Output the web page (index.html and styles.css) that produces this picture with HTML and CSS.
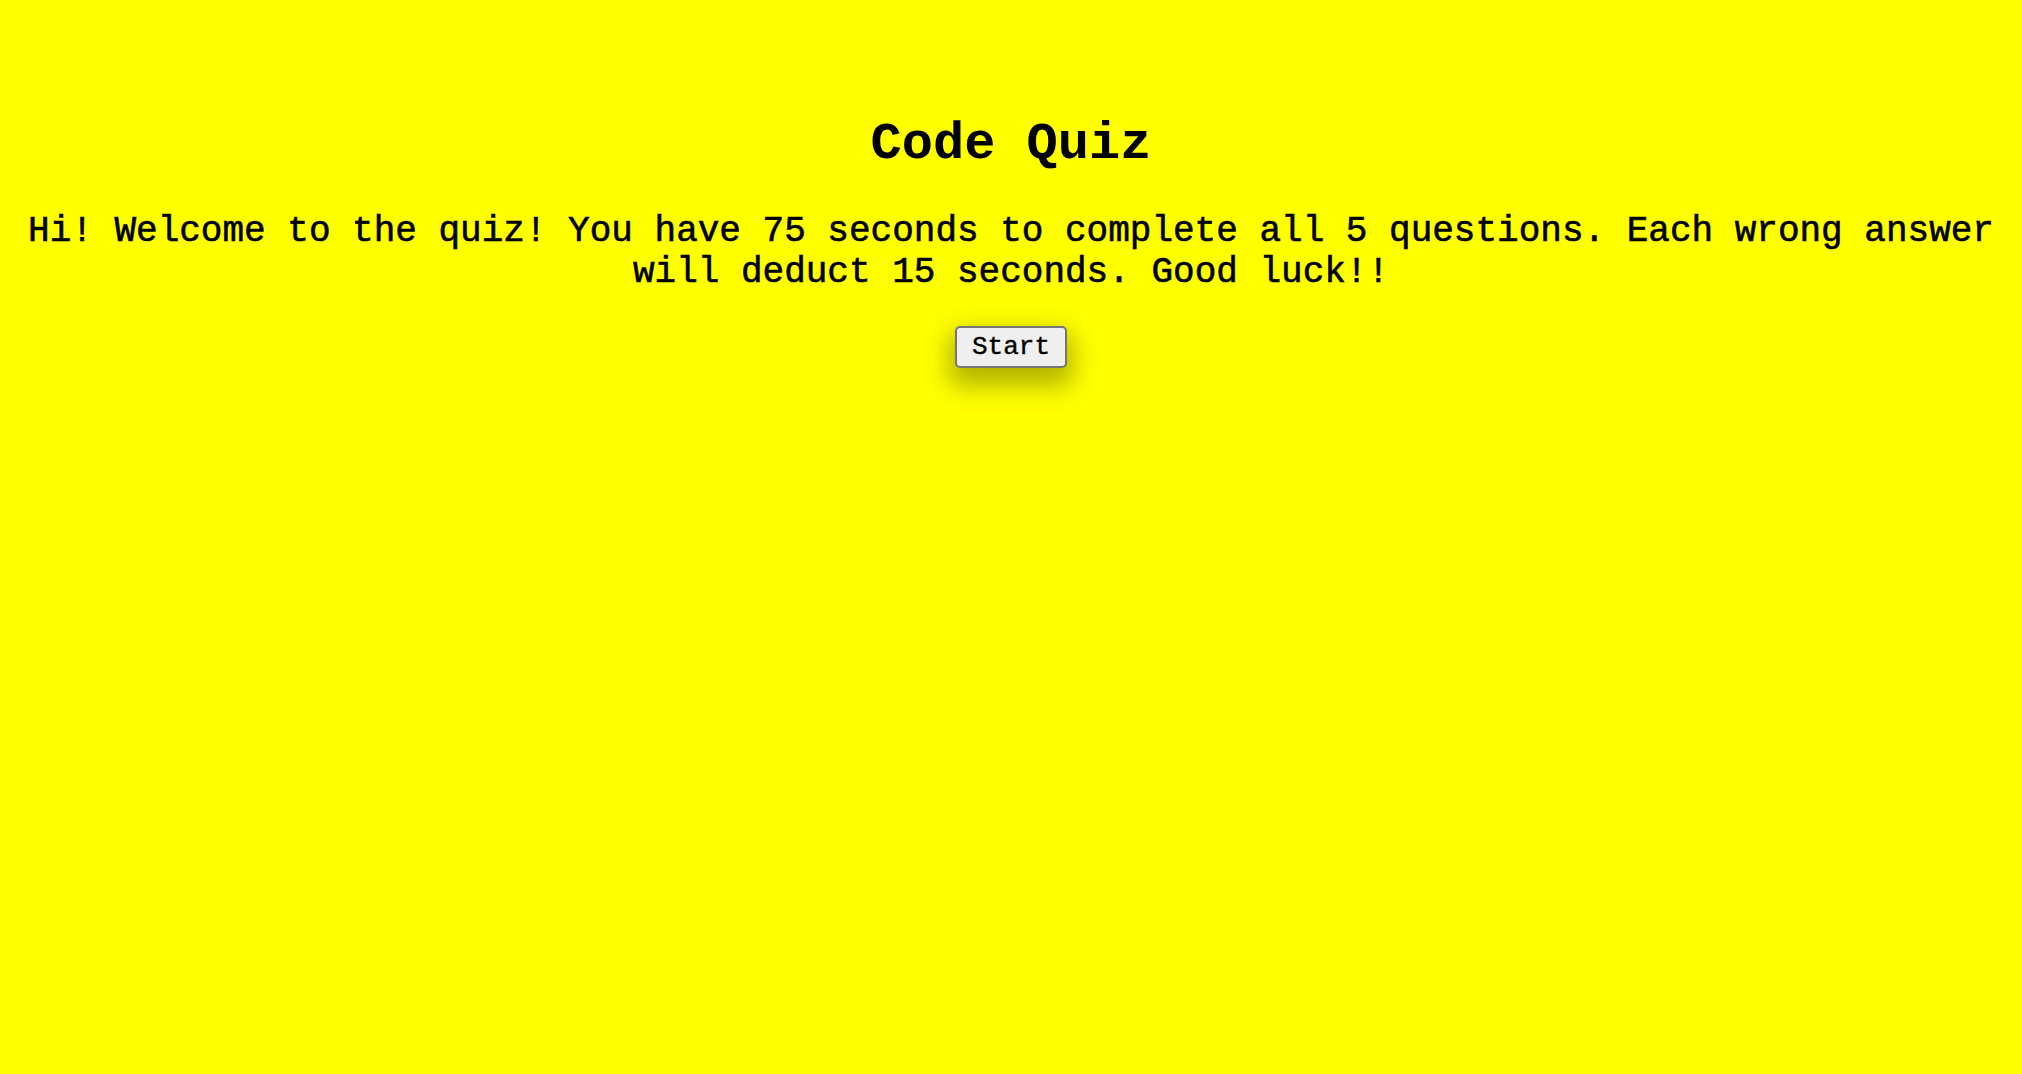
FILE: index.html
```html
<!DOCTYPE html>
<html lang="en">
<head>
<meta charset="utf-8">
<title>Code Quiz</title>
<link rel="stylesheet" href="styles.css">
</head>
<body>
<main class="quiz">
  <h1 class="quiz-title">Code Quiz</h1>
  <p class="quiz-intro">Hi! Welcome to the quiz! You have 75 seconds to complete all 5 questions. Each wrong answer will deduct 15 seconds. Good luck!!</p>
  <button class="start-btn" type="button">Start</button>
</main>
</body>
</html>
```

FILE: styles.css
```css
html, body {
  margin: 0;
  padding: 0;
  background: #ffff00;
}
body {
  font-family: "Liberation Mono", "Courier New", monospace;
  color: #000;
  text-align: center;
  min-height: 100vh;
}
.quiz {
  padding: 115px 8px 0;
}
.quiz-title {
  font-size: 52px;
  font-weight: bold;
  margin: 0 0 37px;
}
.quiz-intro {
  font-size: 36px;
  margin: 0 0 33px;
  -webkit-text-stroke: 0.6px #000;
}
.start-btn {
  font-family: "Liberation Mono", "Courier New", monospace;
  font-size: 26px;
  color: #000;
  background: #efefef;
  border: 2px solid #767676;
  border-radius: 5px;
  padding: 4px 15px;
  -webkit-text-stroke: 0.4px #000;
  box-shadow: 0 12px 24px 6px rgba(90, 90, 0, 0.45);
}
```
